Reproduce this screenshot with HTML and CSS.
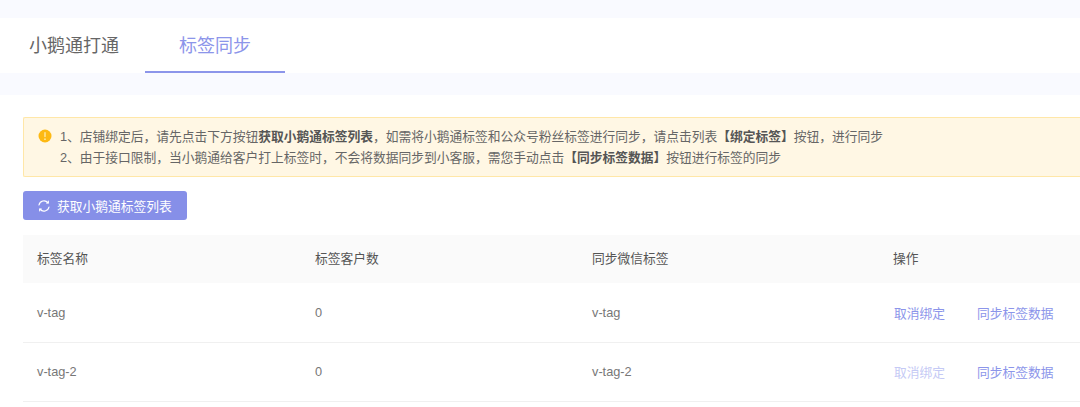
FILE: index.html
```html
<!DOCTYPE html>
<html lang="zh-CN">
<head>
    <meta charset="UTF-8">
    <title>标签同步</title>
    <link rel="stylesheet" href="styles.css">
</head>
<body>
    <div class="tabs">
        <div class="tab">小鹅通打通</div>
        <div class="tab tab-active">标签同步</div>
    </div>

    <div class="content">
        <div class="alert">
            <svg class="alert-icon" width="14" height="14" viewBox="0 0 14 14">
                <circle cx="7" cy="7" r="6.5" fill="#fdb913"/>
                <rect x="6.3" y="3" width="1.4" height="5.2" rx="0.7" fill="#ffe9a8"/>
                <circle cx="7" cy="10.2" r="0.85" fill="#ffe9a8"/>
            </svg>
            <div class="alert-text">
                <p>1、店铺绑定后，请先点击下方按钮<strong>获取小鹅通标签列表</strong>，如需将小鹅通标签和公众号粉丝标签进行同步，请点击列表<strong>【绑定标签】</strong>按钮，进行同步</p>
                <p>2、由于接口限制，当小鹅通给客户打上标签时，不会将数据同步到小客服，需您手动点击<strong>【同步标签数据】</strong>按钮进行标签的同步</p>
            </div>
        </div>

        <button class="btn">
            <svg width="14" height="14" viewBox="0 0 14 14" fill="none" stroke="#fff" stroke-width="1.2" stroke-linecap="round">
                <path d="M2 6A5.1 5.1 0 0 1 11 3.8"/>
                <path d="M12 8A5.1 5.1 0 0 1 3 10.2"/>
                <path d="M11.3 2.2v1.8H9.6"/>
                <path d="M2.7 11.8v-1.8h1.7"/>
            </svg>
            获取小鹅通标签列表
        </button>

        <table class="tag-table">
            <thead>
                <tr>
                    <th class="col-name">标签名称</th>
                    <th class="col-count">标签客户数</th>
                    <th class="col-wx">同步微信标签</th>
                    <th>操作</th>
                </tr>
            </thead>
            <tbody>
                <tr>
                    <td>v-tag</td>
                    <td>0</td>
                    <td>v-tag</td>
                    <td><a class="link">取消绑定</a><a class="link">同步标签数据</a></td>
                </tr>
                <tr>
                    <td>v-tag-2</td>
                    <td>0</td>
                    <td>v-tag-2</td>
                    <td><a class="link link-disabled">取消绑定</a><a class="link">同步标签数据</a></td>
                </tr>
            </tbody>
        </table>
    </div>
</body>
</html>
```

FILE: styles.css
```css
html, body {
    height: 407px;
    overflow: hidden;
}
body {
    margin: 0;
    padding-top: 18px;
    background: #f9faff;
    font-family: "Liberation Sans", "Noto Sans CJK SC", sans-serif;
    color: #666;
    font-size: 12.75px;
}
.tabs {
    display: flex;
    height: 55px;
    background: #fff;
}
.tab {
    box-sizing: border-box;
    width: 145px;
    padding-left: 29px;
    padding-top: 16px;
    font-size: 18px;
    line-height: 24px;
    color: #666;
}
.tab-active {
    width: 140px;
    padding-left: 34px;
    color: #8c95ea;
    border-bottom: 2px solid #8c95ea;
}
.content {
    margin-top: 22px;
    padding: 22px 0 0 23px;
    height: 290px;
    background: #fff;
}
.alert {
    box-sizing: border-box;
    display: flex;
    height: 60px;
    padding: 8px 14px;
    background: #fff7e4;
    border: 1px solid #ffe7a8;
    border-right: none;
    border-radius: 2px 0 0 2px;
}
.alert-icon {
    flex: none;
    margin-top: 3px;
    margin-right: 8px;
}
.alert-text p {
    margin: 0;
    line-height: 21px;
    color: #666;
}
.alert-text strong {
    color: #555;
}
.btn {
    display: flex;
    align-items: center;
    gap: 6px;
    box-sizing: border-box;
    width: 164px;
    height: 29px;
    margin-top: 14px;
    padding: 0 0 0 14px;
    background: #868fe8;
    border: none;
    border-radius: 3px;
    font: inherit;
    color: #fff;
}
.tag-table {
    width: 1057px;
    margin-top: 15px;
    border-collapse: collapse;
    table-layout: fixed;
}
.tag-table th,
.tag-table td {
    box-sizing: border-box;
    padding: 0 0 0 14px;
    white-space: nowrap;
    text-align: left;
}
.tag-table th {
    height: 48px;
    padding-bottom: 3px;
    background: #fafafa;
    font-weight: normal;
    color: #555;
}
.tag-table td {
    height: 59px;
    border-bottom: 1px solid #f0f0f0;
    color: #777;
}
.col-name {
    width: 278px;
}
.col-count {
    width: 277px;
}
.col-wx {
    width: 301px;
}
.link {
    margin-left: 1px;
    margin-right: 31px;
    color: #8c95ea;
}
.link:last-child {
    margin-right: 0;
}
.link-disabled {
    color: #c5caf5;
}
```
